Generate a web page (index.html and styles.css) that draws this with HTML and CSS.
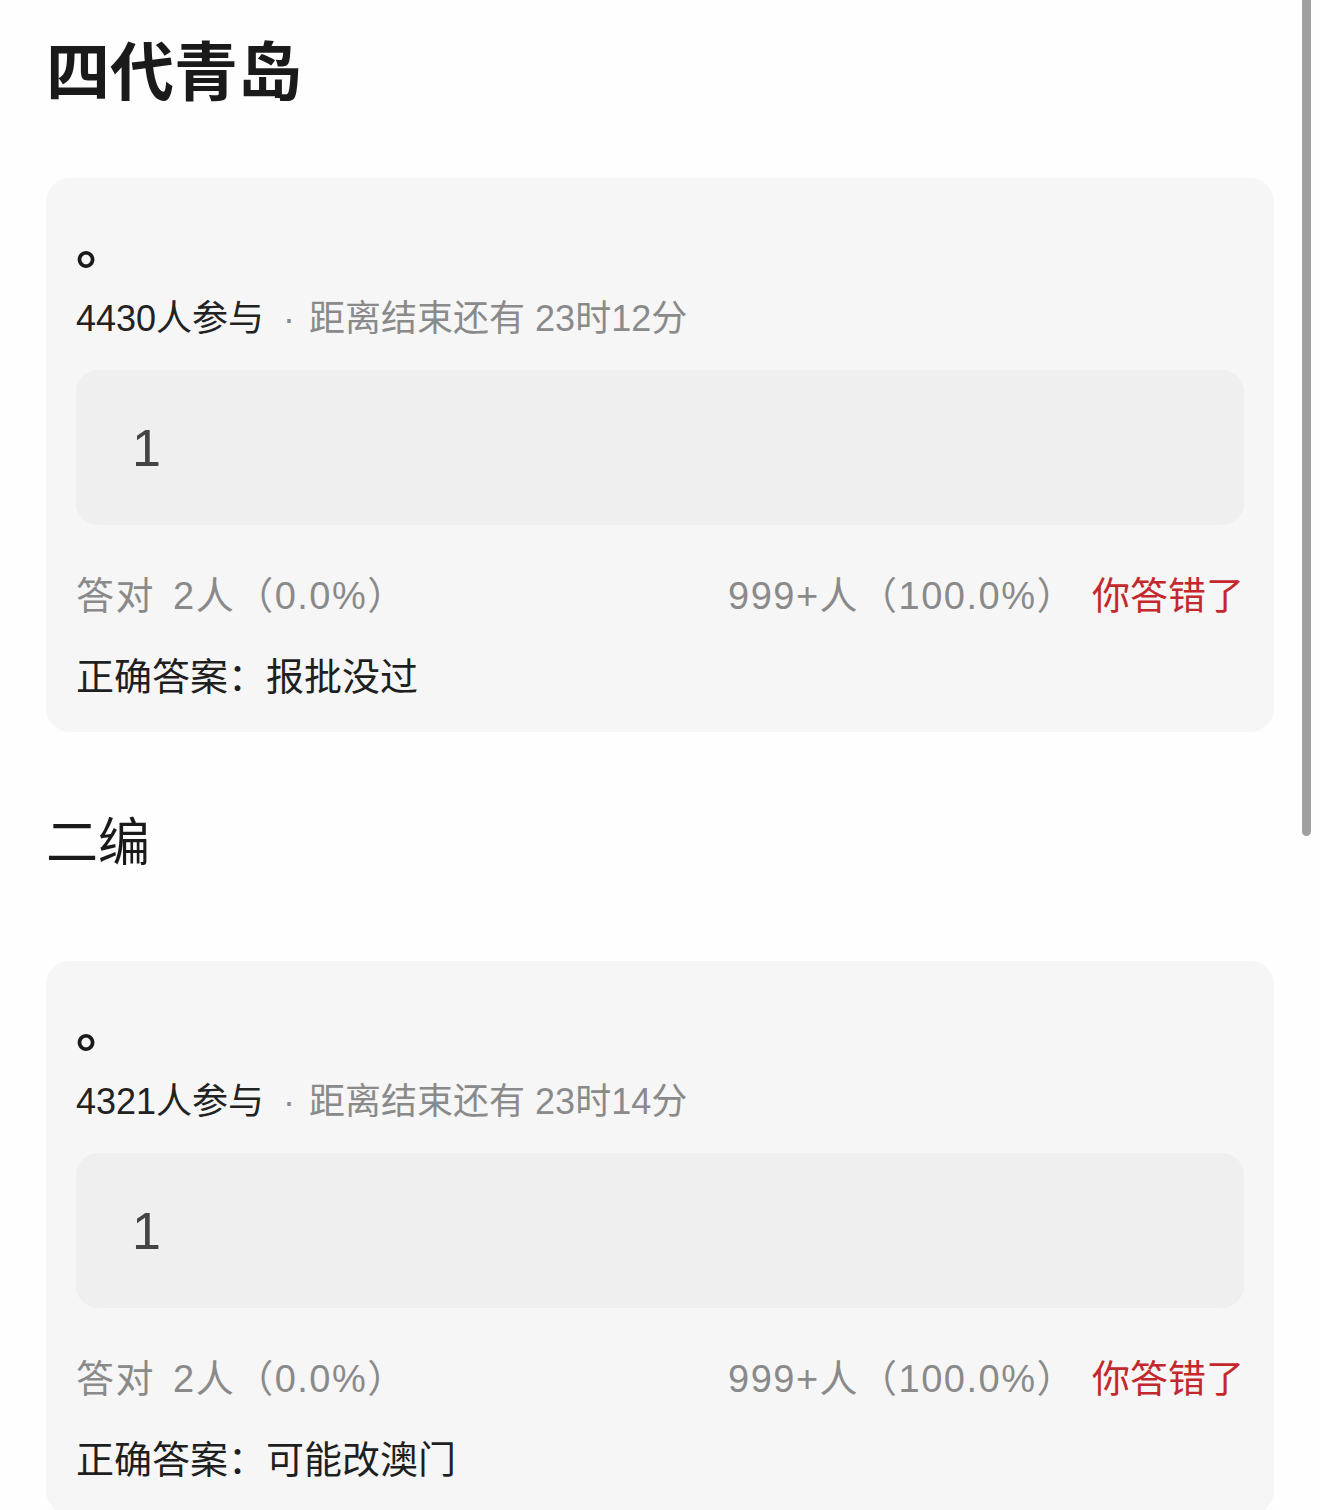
FILE: index.html
```html
<!DOCTYPE html>
<html lang="zh-CN">

<head>
    <meta charset="UTF-8">
    <meta name="viewport" content="width=device-width, initial-scale=1.0">
    <title>四代青岛</title>
    <link rel="stylesheet" href="styles.css">
</head>

<body>
    <div class="page">
        <h1 class="section-title">四代青岛</h1>
        <div class="quiz-card">
            <div class="quiz-question">。</div>
            <div class="quiz-meta"><span class="count">4430人参与</span><span class="dot">·</span>距离结束还有 23时12分</div>
            <div class="quiz-option">1</div>
            <div class="quiz-stats">
                <span class="stats-left">答对<span class="gap"></span>2人（0.0%）</span>
                <span class="stats-right">999+人（100.0%）<span class="wrong">你答错了</span></span>
            </div>
            <div class="quiz-answer">正确答案：报批没过</div>
        </div>

        <h2 class="section-subtitle">二编</h2>
        <div class="quiz-card">
            <div class="quiz-question">。</div>
            <div class="quiz-meta"><span class="count">4321人参与</span><span class="dot">·</span>距离结束还有 23时14分</div>
            <div class="quiz-option">1</div>
            <div class="quiz-stats">
                <span class="stats-left">答对<span class="gap"></span>2人（0.0%）</span>
                <span class="stats-right">999+人（100.0%）<span class="wrong">你答错了</span></span>
            </div>
            <div class="quiz-answer">正确答案：可能改澳门</div>
        </div>
    </div>
    <!-- scroll indicator from the captured screen -->
    <div class="scroll-thumb"></div>
</body>

</html>
```

FILE: styles.css
```css
body {
    font-family: "Liberation Sans", "Noto Sans CJK SC", sans-serif;
    margin: 0;
    background-color: #fefefe;
    color: #1f1f1f;
}

.page {
    padding: 27px 46px 0;
}

.section-title {
    font-family: "Noto Sans CJK SC", sans-serif;
    font-size: 64px;
    line-height: 80px;
    font-weight: 700;
    margin: 0 0 71px;
    color: #1a1a1a;
}

.section-subtitle {
    font-family: "Noto Sans CJK SC", sans-serif;
    font-size: 52px;
    line-height: 70px;
    font-weight: 400;
    margin: 72px 0 87px;
    color: #1a1a1a;
}

.quiz-card {
    background-color: #f6f6f6;
    border-radius: 24px;
    padding: 39px 30px 30px;
}

.quiz-question {
    font-family: "Noto Sans CJK SC", sans-serif;
    font-size: 52px;
    line-height: 50px;
    font-weight: 700;
    color: #1a1a1a;
    margin-bottom: 27px;
}

.quiz-meta {
    font-size: 36px;
    line-height: 50px;
    color: #8a8a8a;
}

.quiz-meta .count {
    color: #222;
}

.quiz-meta .dot {
    margin: 0 14px 0 19px;
}

.quiz-option {
    margin-top: 26px;
    height: 155px;
    background-color: #efefef;
    border-radius: 22px;
    padding-left: 56px;
    display: flex;
    align-items: center;
    font-size: 52px;
    color: #444;
}

.quiz-stats {
    margin-top: 46px;
    display: flex;
    justify-content: space-between;
    font-size: 38px;
    line-height: 50px;
    letter-spacing: 1.5px;
    color: #8a8a8a;
}

.gap {
    display: inline-block;
    width: 18px;
}

.wrong {
    color: #c3282d;
    letter-spacing: 0;
    margin-left: 16px;
}

.quiz-answer {
    margin-top: 31px;
    font-size: 38px;
    line-height: 50px;
    color: #1f1f1f;
}

.scroll-thumb {
    position: fixed;
    top: 0;
    left: 1302px;
    width: 9px;
    height: 836px;
    border-radius: 0 0 5px 5px;
    background-color: #a0a0a0;
}
```
